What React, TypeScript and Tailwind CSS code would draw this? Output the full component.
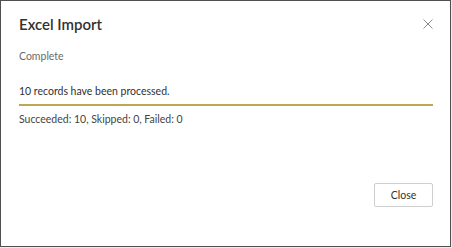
import React from 'react'

const App: React.FC = () => {
  return (
    <div className="w-[452px] h-[248px] bg-[#ececec] font-['Lato',sans-serif]">
      <div className="w-[451px] h-[247px] bg-white border border-[#505050] flex flex-col pl-[18px] pr-[17px]">
        {/* Header */}
        <div className="flex items-start justify-between pt-[13px]">
          <h1 className="text-[15px] leading-[20px] font-semibold text-[#323130]">Excel Import</h1>
          <button className="mt-[5px] w-[10px] h-[10px] flex items-center justify-center text-[#8a8a8a]">
            <svg width="10" height="10" viewBox="0 0 10 10" fill="none" stroke="currentColor" strokeWidth="1">
              <path d="M0.5 0.5 L9.5 9.5 M9.5 0.5 L0.5 9.5" />
            </svg>
          </button>
        </div>

        {/* Status */}
        <div className="mt-[15px] text-[10.5px] leading-[14px] text-[#6b6b6b]">Complete</div>

        {/* Message field */}
        <div className="mt-[21px] border-b-2 border-[#bda755] pb-[6px] text-[10.5px] leading-[14px] text-[#323130]">
          10 records have been processed.
        </div>

        {/* Summary */}
        <div className="mt-[6px] text-[10.5px] leading-[14px] text-[#444]">
          Succeeded: 10, Skipped: 0, Failed: 0
        </div>

        <div className="flex-1" />

        {/* Footer */}
        <div className="flex justify-end pb-[39px]">
          <button className="w-[59px] h-[24px] border border-[#cfcfcf] rounded-[2px] bg-white text-[10.5px] leading-[14px] text-[#323130]">
            Close
          </button>
        </div>
      </div>
    </div>
  )
}

export default App
